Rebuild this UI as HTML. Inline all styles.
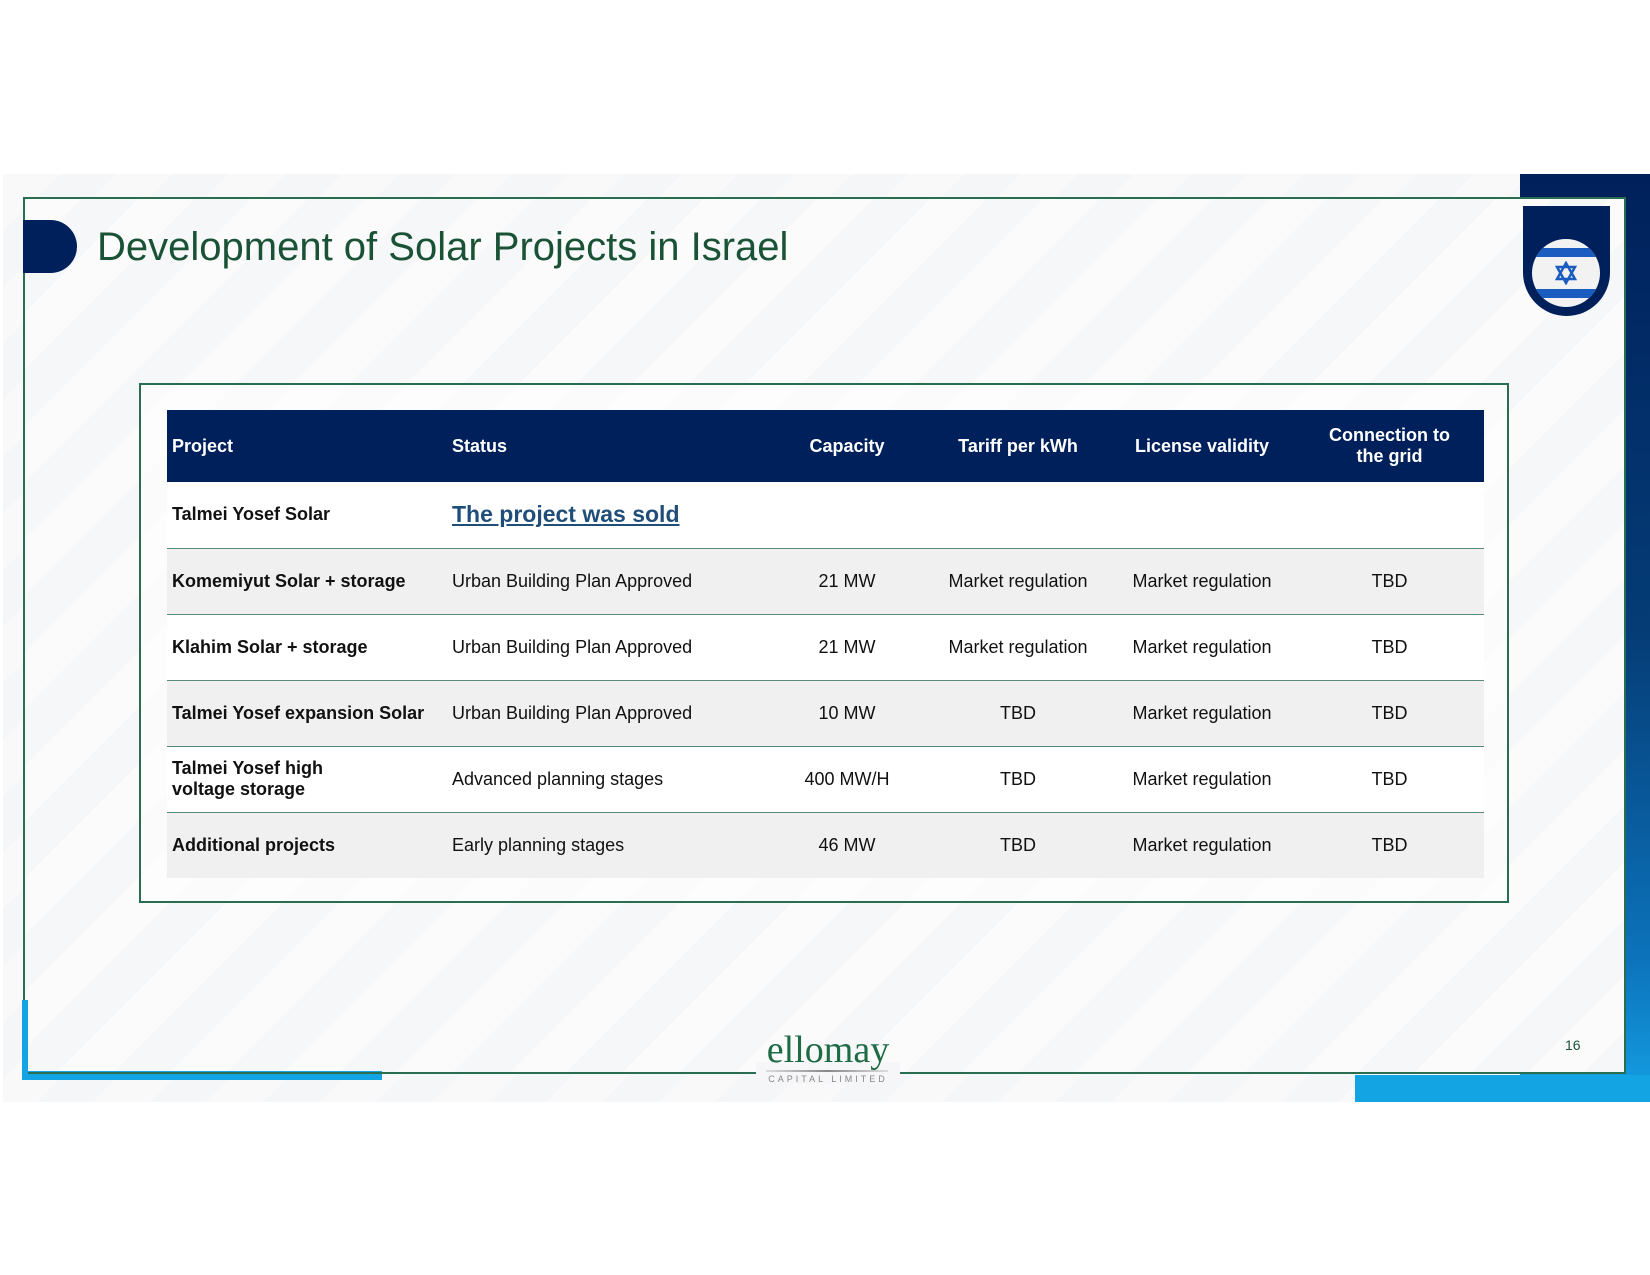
<!DOCTYPE html>
<html><head><meta charset="utf-8"><style>
*{margin:0;padding:0;box-sizing:border-box}
body{width:1650px;height:1275px;background:#fff;position:relative;overflow:hidden;font-family:"Liberation Sans",sans-serif}
.slide{position:absolute;left:3px;top:174px;width:1647px;height:928px;background:repeating-linear-gradient(135deg,#f9f9fa 0 40px,#f5f6f8 40px 80px)}
.abs{position:absolute}
table{border-collapse:collapse;position:absolute;left:167px;top:410px;width:1317px;font-size:18px;color:#111}
td,th{height:66px;padding:0 5px;vertical-align:middle}
th{background:#00205b;color:#fff;font-weight:bold;height:72px;text-align:left}
tr.r td{border-top:1px solid #5a8a78}
tr.g td{background:#f0f0f0}
tr.w td{background:#fff}
.c{text-align:center}
td.p{font-weight:bold}
</style></head><body>
<div class="slide"></div>
<div class="abs" style="left:1520px;top:174px;width:130px;height:928px;background:linear-gradient(#00205b,#003e78 60%,#0a6fb8 85%,#1aa3e6)"></div>
<div class="abs" style="left:1626px;top:174px;width:24px;height:928px;background:linear-gradient(#00205b,#053d77 50%,#0c74bc 85%,#15a0e4)"></div>
<div class="abs" style="left:23px;top:197px;width:1603px;height:877px;background:repeating-linear-gradient(135deg,#fbfbfc 0 40px,#f6f7f9 40px 80px);border:2px solid #2a6e52"></div>
<div class="abs" style="left:1355px;top:1075px;width:295px;height:27px;background:#13a4e4"></div>
<div class="abs" style="left:22px;top:1000px;width:6px;height:80px;background:#13a4e4"></div>
<div class="abs" style="left:22px;top:1071px;width:360px;height:9px;background:#13a4e4"></div>
<div class="abs" style="left:23px;top:220px;width:54px;height:53px;background:#00205b;border-radius:0 27px 27px 0"></div>
<div class="abs" style="left:97px;top:225px;font-size:40px;color:#1a5236">Development of Solar Projects in Israel</div>
<div class="abs" style="left:1523px;top:206px;width:87px;height:110px;background:#00205b;border-radius:0 0 44px 44px"></div>
<div class="abs" style="left:1532px;top:239px;width:68px;height:68px;background:#f2f2f2;border-radius:50%;overflow:hidden">
 <div class="abs" style="left:0;top:9px;width:68px;height:9px;background:#1a5cc0"></div>
 <div class="abs" style="left:0;top:50px;width:68px;height:9px;background:#1a5cc0"></div>
 <svg class="abs" style="left:22px;top:22px" width="24" height="24" viewBox="0 0 24 24"><polygon points="12,2 21,18 3,18" fill="none" stroke="#1a5cc0" stroke-width="2.5"/><polygon points="12,22 21,6 3,6" fill="none" stroke="#1a5cc0" stroke-width="2.5"/></svg>
</div>
<div class="abs" style="left:139px;top:383px;width:1370px;height:520px;border:2px solid #2a6e52;background:rgba(255,255,255,0.5)"></div>
<table>
<tr><th style="width:280px">Project</th><th style="width:320px">Status</th><th class="c" style="width:160px">Capacity</th><th class="c" style="width:182px">Tariff per kWh</th><th class="c" style="width:186px">License validity</th><th class="c">Connection to<br>the grid</th></tr>
<tr class="w"><td class="p">Talmei Yosef Solar</td><td colspan="5"><span style="color:#1f4e79;font-weight:bold;text-decoration:underline;font-size:23px">The project was sold</span></td></tr>
<tr class="r g"><td class="p">Komemiyut Solar + storage</td><td>Urban Building Plan Approved</td><td class="c">21 MW</td><td class="c">Market regulation</td><td class="c">Market regulation</td><td class="c">TBD</td></tr>
<tr class="r w"><td class="p">Klahim Solar + storage</td><td>Urban Building Plan Approved</td><td class="c">21 MW</td><td class="c">Market regulation</td><td class="c">Market regulation</td><td class="c">TBD</td></tr>
<tr class="r g"><td class="p">Talmei Yosef expansion Solar</td><td>Urban Building Plan Approved</td><td class="c">10 MW</td><td class="c">TBD</td><td class="c">Market regulation</td><td class="c">TBD</td></tr>
<tr class="r w"><td class="p">Talmei Yosef high<br>voltage storage</td><td>Advanced planning stages</td><td class="c">400 MW/H</td><td class="c">TBD</td><td class="c">Market regulation</td><td class="c">TBD</td></tr>
<tr class="r g"><td class="p">Additional projects</td><td>Early planning stages</td><td class="c">46 MW</td><td class="c">TBD</td><td class="c">Market regulation</td><td class="c">TBD</td></tr>
</table>
<div class="abs" style="left:28px;top:1072px;width:727px;height:2px;background:#2a6e52"></div>
<div class="abs" style="left:900px;top:1072px;width:455px;height:2px;background:#2a6e52"></div>
<div class="abs" style="left:756px;top:1062px;width:144px;height:22px;background:#f6f6f8"></div>
<div class="abs" style="left:740px;top:1030px;width:176px;text-align:center;font-family:'Liberation Serif',serif;font-size:38px;color:#1f6b45;line-height:40px">ellomay</div>
<div class="abs" style="left:766px;top:1070px;width:122px;height:2px;background:linear-gradient(90deg,#ddd,#888,#ddd)"></div>
<div class="abs" style="left:740px;top:1074px;width:176px;text-align:center;font-size:9px;letter-spacing:3px;color:#888">CAPITAL LIMITED</div>
<div class="abs" style="left:1565px;top:1037px;font-size:14px;color:#1a5236">16</div>
</body></html>
